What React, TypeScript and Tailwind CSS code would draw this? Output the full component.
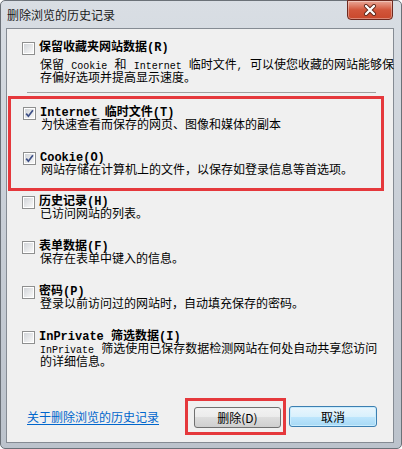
import React from 'react';

function Box({ checked }: { checked?: boolean }) {
  return (
    <span className="flex h-[13px] w-[13px] shrink-0 items-center justify-center border border-[#8e8f8f] bg-white">
      <span className="flex h-[9px] w-[9px] items-center justify-center bg-gradient-to-br from-[#d2d5d9] to-[#f8f8f8]">
        {checked && (
          <svg width="9" height="9" viewBox="0 0 9 9">
            <path d="M1.2 4.6 L3.4 7.2 L7.9 1.2" fill="none" stroke="#3d4f86" strokeWidth="1.7" />
          </svg>
        )}
      </span>
    </span>
  );
}

function Item({ label, checked, children }: { label: React.ReactNode; checked?: boolean; children: React.ReactNode }) {
  return (
    <div>
      <div className="flex h-[14px] items-center gap-[4px]">
        <Box checked={checked} />
        <span className="text-[12px] font-bold leading-[14px] whitespace-nowrap">{label}</span>
      </div>
      <div className="pl-[18px] text-[12px] leading-[13px] whitespace-nowrap">{children}</div>
    </div>
  );
}

const En = ({ children }: { children: React.ReactNode }) => <span className="text-[10px]">{children}</span>;

export default function App() {
  return (
    <div className="flex h-[449px] w-[402px] flex-col rounded-[5px] border border-[#6b7178] bg-gradient-to-b from-[#d9dee4] via-[#c8ced6] to-[#bcc3cc] pr-[7px] pl-[5px] pb-[5px] font-['Liberation_Mono','Noto_Sans_CJK_SC',monospace] text-black">
      <div className="flex h-[27px] shrink-0 items-start justify-between">
        <span className="mt-[6px] pl-[1px] font-['Noto_Sans_CJK_SC',sans-serif] text-[12px] leading-[16px] text-[#1a1a1a]">
          删除浏览的历史记录
        </span>
        <div className="-mt-px mr-[1px] flex h-[20px] w-[46px] items-center justify-center rounded-b-[4px] border border-[#6e2a20] bg-gradient-to-b from-[#e9a797] via-[#d2553a] to-[#c9482c] shadow-[inset_0_0_0_1px_rgba(255,255,255,0.35)]">
          <svg width="14" height="12" viewBox="0 0 14 12">
            <path d="M3 2 L11 10 M11 2 L3 10" stroke="#5a2418" strokeWidth="4" strokeLinecap="round" />
            <path d="M3 2 L11 10 M11 2 L3 10" stroke="#ffffff" strokeWidth="2.4" strokeLinecap="round" />
          </svg>
        </div>
      </div>

      <div className="flex flex-1 flex-col border border-[#858b93] bg-[#f0f0f0]">
        <div className="pt-[12px] pl-[15px]">
          <div className="flex h-[14px] items-center gap-[4px]">
            <Box />
            <span className="text-[12px] font-bold leading-[14px]">保留收藏夹网站数据(R)</span>
          </div>
          <div className="mt-[5px] pl-[18px] text-[12px] leading-[13px] whitespace-nowrap">
            保留 <En>Cookie</En> 和 <En>Internet</En> 临时文件<En>,</En> 可以使您收藏的网站能够保
            <br />
            存偏好选项并提高显示速度。
          </div>
        </div>
        <div className="mt-[6px] ml-[20px] w-[349px] border-t border-[#a0a0a0]" />

        <div className="mt-[3px] ml-[1px] mr-[9px] border-[3px] border-[#e5383c] pt-[7px] pb-[10px] pl-[12px]">
          <div className="flex flex-col gap-[18px]">
            <Item label="Internet 临时文件(T)" checked>
              为快速查看而保存的网页、图像和媒体的副本
            </Item>
            <Item label="Cookie(O)" checked>
              网站存储在计算机上的文件，以保存如登录信息等首选项。
            </Item>
          </div>
        </div>

        <div className="mt-[4px] flex flex-col gap-[18px] pl-[15px]">
          <Item label="历史记录(H)">已访问网站的列表。</Item>
          <Item label="表单数据(F)">保存在表单中键入的信息。</Item>
          <Item label="密码(P)">登录以前访问过的网站时，自动填充保存的密码。</Item>
          <Item label="InPrivate 筛选数据(I)">
            <En>InPrivate</En> 筛选使用已保存数据检测网站在何处自动共享您访问
            <br />
            的详细信息。
          </Item>
        </div>

        <div className="mt-auto flex items-center pr-[16px] pb-[7px] pl-[20px] font-['Noto_Sans_CJK_SC',sans-serif] text-[12px]">
          <a className="text-[#0066cc] underline underline-offset-[2px]">关于删除浏览的历史记录</a>
          <div className="ml-auto border-[3px] border-[#e5383c] pt-[6px] pr-[2px] pb-[4px] pl-[6px]">
            <button className="flex h-[21px] w-[87px] items-center justify-center rounded-[3px] border border-[#707070] bg-[linear-gradient(#f2f2f2_0%,#ebebeb_50%,#dddddd_50%,#cfcfcf_100%)] text-[12px] leading-none">
              删除(D)
            </button>
          </div>
          <button className="ml-[3px] flex h-[21px] w-[88px] items-center justify-center rounded-[3px] border border-[#3c7fb1] bg-[linear-gradient(#eaf6fd_0%,#d9f0fc_50%,#bee6fd_50%,#a7d9f5_100%)] text-[12px] leading-none shadow-[inset_0_0_0_1px_#c9ecfd]">
            取消
          </button>
        </div>
      </div>
    </div>
  );
}
